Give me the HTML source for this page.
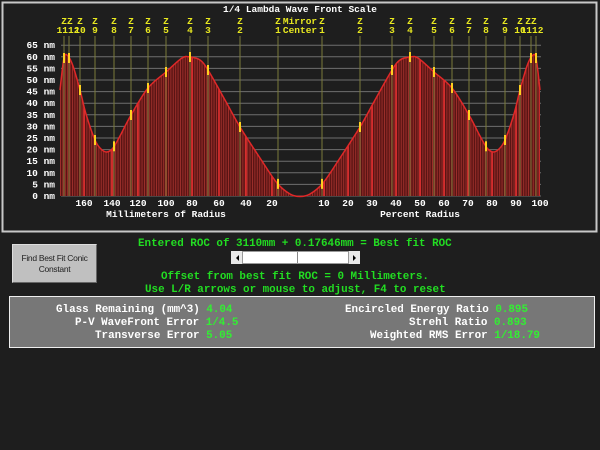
<!DOCTYPE html><html><head><meta charset="utf-8"><style>
body{margin:0;width:600px;height:450px;background:#1e1e1e;overflow:hidden;font-family:"Liberation Mono",monospace;}
.t{position:absolute;font-size:10.9px;line-height:12px;white-space:pre;font-weight:bold}
</style></head><body>
<svg id="s" width="600" height="450" style="position:absolute;left:0;top:0" font-family="Liberation Mono, monospace" font-size="9.5" font-weight="bold">
<defs><pattern id="p" width="2.4" height="10" patternUnits="userSpaceOnUse"><rect width="2.4" height="10" fill="#5a1414"/><rect width="0.9" height="10" fill="#a0302c"/></pattern></defs>
<rect x="2.5" y="2.5" width="594" height="229" fill="#1e1e1e" stroke="#c8c8c8" stroke-width="2"/>
<g id="g"></g>
</svg>
<div class="t" style="left:138px;top:238px;color:#22dd22">Entered ROC of 3110mm + 0.17646mm = Best fit ROC</div>
<div style="position:absolute;left:12px;top:244px;width:85px;height:39px;background:#c0c0c0;border:1px solid #ddd;border-right-color:#666;border-bottom-color:#666;font-family:'Liberation Sans',sans-serif;font-size:8.5px;color:#222;text-align:center;line-height:11px;padding-top:8px;box-sizing:border-box;letter-spacing:-0.3px">Find Best Fit Conic<br>Constant</div>
<div style="position:absolute;left:231px;top:251px;width:129px;height:13px;background:#fff;border:1px solid #999;box-sizing:border-box"></div>
<div style="position:absolute;left:231px;top:251px;width:12px;height:13px;background:#e8e8e8;border-right:1px solid #999;box-sizing:border-box"></div>
<div style="position:absolute;left:348px;top:251px;width:12px;height:13px;background:#e8e8e8;border-left:1px solid #999;box-sizing:border-box"></div>
<div style="position:absolute;left:236px;top:255px;border:3px solid transparent;border-right:3px solid #000;border-left:0"></div>
<div style="position:absolute;left:353px;top:255px;border:3px solid transparent;border-left:3px solid #000;border-right:0"></div>
<div style="position:absolute;left:297px;top:252px;width:1px;height:11px;background:#888"></div>
<div class="t" style="left:161px;top:271px;color:#22dd22">Offset from best fit ROC = 0 Millimeters.</div>
<div class="t" style="left:145px;top:284px;color:#22dd22">Use L/R arrows or mouse to adjust, F4 to reset</div>
<div style="position:absolute;left:9px;top:296px;width:586px;height:52px;background:#777;border:1px solid #eee;box-sizing:border-box"></div>
<div class="t" style="left:56px;top:304px;color:#fff">Glass Remaining (mm^3) <span style="color:#33ee33">4.04</span></div>
<div class="t" style="left:75px;top:317px;color:#fff">P-V WaveFront Error <span style="color:#33ee33">1/4.5</span></div>
<div class="t" style="left:95px;top:330px;color:#fff">Transverse Error <span style="color:#33ee33">5.05</span></div>
<div class="t" style="left:345px;top:304px;color:#fff">Encircled Energy Ratio <span style="color:#33ee33">0.895</span></div>
<div class="t" style="left:409px;top:317px;color:#fff">Strehl Ratio <span style="color:#33ee33">0.893</span></div>
<div class="t" style="left:370px;top:330px;color:#fff">Weighted RMS Error <span style="color:#33ee33">1/18.79</span></div>
<script>
var g=document.getElementById('g'),h='';
function T(x,y,s,c,a){h+='<text x="'+x+'" y="'+y+'" fill="'+c+'" text-anchor="'+(a||'middle')+'">'+s+'</text>';}
function L(x1,y1,x2,y2,c,w){h+='<line x1="'+x1+'" y1="'+y1+'" x2="'+x2+'" y2="'+y2+'" stroke="'+c+'" stroke-width="'+(w||1)+'"/>';}
T(300,12,'1/4 Lambda Wave Front Scale','#fff');
for(var i=0;i<=13;i++){var y=196-i*11.6;L(61,y,541,y,'#6e6e6e');T(55,y+3,i*5+' nm','#fff','end');}
var pts=[[300,196.5],[310,194],[323,183],[340,158],[360,127],[375,100],[392,70],[400,60],[410,57],[418,58],[434,72],[452,88],[469,115],[480,136],[487,148],[493,152],[499,149],[505,140],[514,114],[520,90],[527,66],[532,56],[536,58],[540,90]];
function cr(ps){var s='M'+ps[0][0]+' '+ps[0][1];for(var i=0;i<ps.length-1;i++){var p0=ps[i-1]||ps[i],p1=ps[i],p2=ps[i+1],p3=ps[i+2]||p2;s+='C'+(p1[0]+(p2[0]-p0[0])/6)+' '+(p1[1]+(p2[1]-p0[1])/6)+' '+(p2[0]-(p3[0]-p1[0])/6)+' '+(p2[1]-(p3[1]-p1[1])/6)+' '+p2[0]+' '+p2[1];}return s;}
var R=pts, Lp=pts.slice().reverse().map(function(p){return [600-p[0],p[1]];});
var all=Lp.concat(R.slice(1));
var d=cr(all);
h+='<path d="'+d+'L540 196L60 196Z" fill="url(#p)"/>';
var xs=[84,112,138,166,192,219,246,272,324,348,372,396,420,444,468,492,516,540];
h+='<clipPath id="cc"><path d="'+d+'L540 196L60 196Z"/></clipPath><g clip-path="url(#cc)">';
xs.forEach(function(x){L(x,40,x,196,'#e83030',1.5);});
h+='</g>';
h+='<path d="'+d+'" fill="none" stroke="#e02828" stroke-width="1.5"/>';
var zr=[322,360,392,410,434,452,469,486,505,520,531,536];
var zs=['1','2','3','4','5','6','7','8','9','10','11','12'];
function yAt(x){for(var i=0;i<all.length-1;i++){var a=all[i],b=all[i+1];if((x-a[0])*(x-b[0])<=0&&a[0]!=b[0])return a[1]+(b[1]-a[1])*(x-a[0])/(b[0]-a[0]);}return 196;}
zr.forEach(function(x,i){[x,600-x].forEach(function(xx){L(xx,36,xx,196,'#7a7a3a');var y=yAt(xx);L(xx,y-5,xx,y+5,'#ffd020',2);});});
zr.forEach(function(x,i){if(i<10){T(x,24,'Z','#e8e820');T(x,33,zs[i],'#e8e820');T(600-x,24,'Z','#e8e820');T(600-x,33,zs[i],'#e8e820');}});
T(531,24,'ZZ','#e8e820');T(532,33,'1112','#e8e820');T(67,24,'ZZ','#e8e820');T(68,33,'1112','#e8e820');
T(300,24,'Mirror','#e8e820');T(300,33,'Center','#e8e820');
var lab=['160','140','120','100','80','60','40','20','10','20','30','40','50','60','70','80','90','100'];
xs.forEach(function(x,i){T(x,206,lab[i],'#fff');});
T(166,217,'Millimeters of Radius','#fff');T(420,217,'Percent Radius','#fff');
g.innerHTML=h;
</script>
</body></html>
